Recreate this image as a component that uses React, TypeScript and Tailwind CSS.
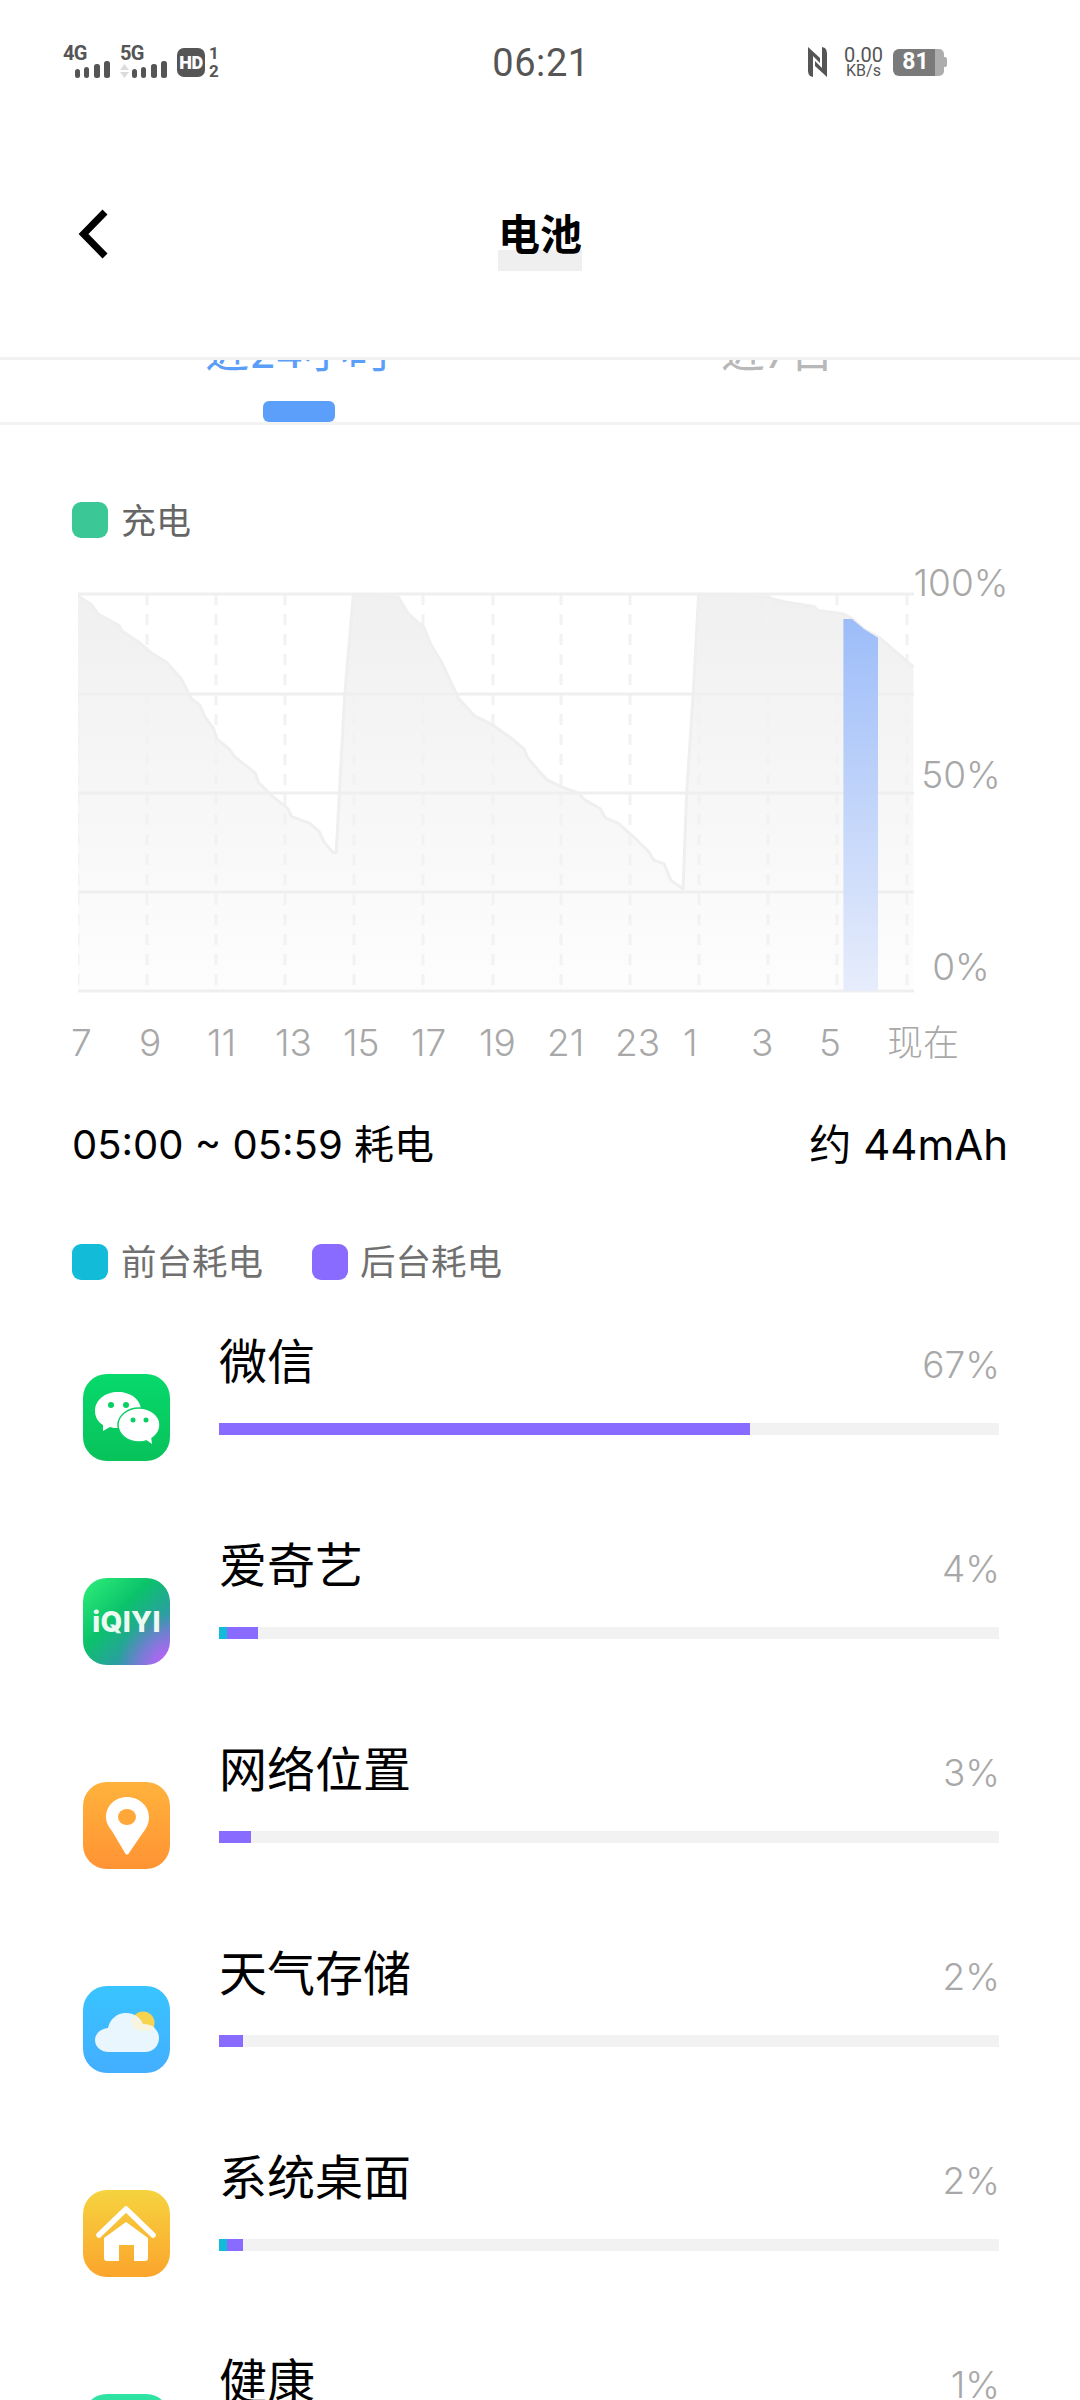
const leftPts = [[226,302],[265,325],[285,350],[345,380],[355,395],[405,425],[440,452],[482,475],[525,518],[555,570],[580,588],[595,620],[620,650],[628,675],[665,702],[680,722],[740,765],[750,790],[790,825],[835,858],[845,878],[900,897],[925,917],[940,945],[965,972],[975,972],[1000,558],[1025,298],[1155,305],[1185,350],[1230,385],[1250,430],[1280,475],[1330,570],[1375,615],[1430,640],[1480,672],[1520,702],[1530,725],[1568,765]];
const rightPts = [[20,782],[60,800],[110,817],[130,835],[175,858],[190,882],[225,895],[270,930],[315,970],[330,992],[360,1002],[380,1045],[415,1067],[425,820],[445,550],[460,298],[655,305],[720,320],[795,330],[805,340],[880,350],[905,362],[940,390],[985,412],[1015,435],[1083,488]];
const curve = [
  ...leftPts.map(([x, y]) => [x / 2.9, 480 + y / 2.61]),
  ...rightPts.map(([x, y]) => [540 + x / 2.9, 480 + y / 2.61]),
];
const line = curve.map(([x, y]) => `${x.toFixed(1)},${y.toFixed(1)}`).join(" L");
const bar = [[843.4,619],[852,619],[864,629],[878,637.8],[878,991],[843.4,991]].map((p) => p.join(",")).join(" ");
const gridY = [594, 694, 793, 892, 991];
const gridX = [78, 147, 216, 285, 354, 423, 493, 561, 630, 699, 768, 837, 907];
const hours = ["7", "9", "11", "13", "15", "17", "19", "21", "23", "1", "3", "5", "现在"];

function Signal({ label, arrows }: { label: string; arrows?: boolean }) {
  return (
    <div className="flex w-[47px] flex-col">
      <span className="h-[15px] font-['Roboto'] text-[20px] font-bold leading-[15px] tracking-[-0.8px] text-[#555]">{label}</span>
      <svg width="47" height="18" viewBox="0 0 47 18" className="mt-[-1px]">
        {arrows && <path d="M4.5 4 9 10H0ZM4.5 18 0 12H9Z" fill="#dcdcdc" />}
        <rect x="12" y="9" width="5" height="9" rx="2.5" fill="#555" />
        <rect x="21" y="7" width="5" height="11" rx="2.5" fill="#555" />
        <rect x="31" y="4" width="6" height="14" rx="2.5" fill="#555" />
        <rect x="41" y="1" width="6" height="17" rx="2.5" fill="#555" />
      </svg>
    </div>
  );
}

function WeChatIcon() {
  return (
    <div className="h-[87px] w-[87px] rounded-[24px] bg-gradient-to-b from-[#07d96c] to-[#08c25a]">
      <svg width="87" height="87" viewBox="0 0 87 87">
        <path d="M35 18C22 18 12 26 12 37c0 6 3 11 8 14l0 6 7-4c3 1 5 1 8 1 13 0 23-8 23-18S48 18 35 18Z" fill="#fff" />
        <ellipse cx="56" cy="51" rx="21" ry="17" fill="#fff" stroke="#09ce62" strokeWidth="1.5" />
        <path d="M62 65l7 5-1-8Z" fill="#fff" />
        <circle cx="28" cy="31" r="3" fill="#08cf63" />
        <circle cx="43" cy="31" r="3" fill="#08cf63" />
        <circle cx="50" cy="46" r="2.5" fill="#08cf63" />
        <circle cx="63" cy="46" r="2.5" fill="#08cf63" />
      </svg>
    </div>
  );
}

function IqiyiIcon() {
  return (
    <div className="flex h-[87px] w-[87px] items-center justify-center rounded-[24px] bg-[radial-gradient(circle_at_100%_100%,#c65ffd_0%,#c65ffd00_42%),linear-gradient(135deg,#2ff07a_0%,#0bc26a_40%,#2f9aa8_72%,#5f80d8_100%)]">
      <span className="font-['Inter'] text-[28px] font-extrabold leading-none tracking-[0.3px] text-[#ecfaf2]">iQIYI</span>
    </div>
  );
}

function PinIcon() {
  return (
    <div className="h-[87px] w-[87px] rounded-[24px] bg-gradient-to-b from-[#ffb23c] to-[#ff9333]">
      <svg width="87" height="87" viewBox="0 0 87 87">
        <path d="M44 15C32 15 23 24 23 35c0 6 3 10 6 14l13 22c1 2 3 2 4 0l13-19c4-5 7-10 7-17C66 24 56 15 44 15Z" fill="#fff" />
        <ellipse cx="44" cy="35" rx="9" ry="8" fill="#ffa738" />
      </svg>
    </div>
  );
}

function WeatherIcon() {
  return (
    <div className="h-[87px] w-[87px] rounded-[24px] bg-gradient-to-b from-[#38c4ff] to-[#43aeff]">
      <svg width="87" height="87" viewBox="0 0 87 87">
        <circle cx="60" cy="37" r="11.5" fill="#f8d34e" />
        <path d="M26 66C17 66 12 60 12 54s5-11 13-12c2-9 9-15 18-15 8 0 14 4 17 11 9 0 16 6 16 14s-6 14-14 14Z" fill="#eaf6fd" />
        <path d="M50 31c3 1 6 4 10 7 5 0 9 1 12 4-3 2-7 3-11 3-9 0-15-6-11-14Z" fill="#fff3cf" opacity="0.7" />
      </svg>
    </div>
  );
}

function HomeIcon() {
  return (
    <div className="h-[87px] w-[87px] rounded-[24px] bg-gradient-to-b from-[#f5d33f] to-[#fba42c]">
      <svg width="87" height="87" viewBox="0 0 87 87">
        <path d="M16 46 43 20 70 46" fill="none" stroke="#fff" strokeWidth="5.5" strokeLinecap="round" strokeLinejoin="round" transform="translate(0 -1)" />
        <path d="M21 48 43 32l22 16v20q0 3-3 3H51V55H36v16H24q-3 0-3-3Z" fill="#fff" />
      </svg>
    </div>
  );
}

function HealthIcon() {
  return <div className="h-[87px] w-[87px] rounded-[24px] bg-gradient-to-b from-[#2fe3a3] to-[#2bd896]" />;
}

const rows = [
  { name: "微信", pct: "67%", icon: <WeChatIcon />, fg: 0, bg: 531 },
  { name: "爱奇艺", pct: "4%", icon: <IqiyiIcon />, fg: 8, bg: 31 },
  { name: "网络位置", pct: "3%", icon: <PinIcon />, fg: 0, bg: 32 },
  { name: "天气存储", pct: "2%", icon: <WeatherIcon />, fg: 0, bg: 24 },
  { name: "系统桌面", pct: "2%", icon: <HomeIcon />, fg: 8, bg: 16 },
  { name: "健康", pct: "1%", icon: <HealthIcon />, fg: 0, bg: 16 },
];

export default function App() {
  return (
    <div className="h-[2400px] w-[1080px] overflow-hidden bg-white font-['Inter','Noto_Sans_CJK_SC',sans-serif]">
      <header className="h-[360px] border-b-[3px] border-[#f1f1f1] pt-[42px]">
        <div className="grid h-[38px] grid-cols-[1fr_auto_1fr] items-center">
          <div className="flex items-center gap-[10px] pl-[63px]">
            <Signal label="4G" />
            <Signal label="5G" arrows />
            <div className="flex h-[29px] w-[28px] items-center justify-center rounded-[7px] bg-[#555] font-['Roboto'] text-[18px] font-black tracking-[-0.5px] text-white">HD</div>
            <div className="ml-[-6px] flex h-[30px] flex-col items-center justify-between font-['Roboto'] text-[17px] font-bold leading-[12px] text-[#555]">
              <span>1</span>
              <span>2</span>
            </div>
          </div>
          <div className="ml-[2px] mt-[2px] font-['Roboto'] text-[38px] leading-[38px] tracking-[0.6px] text-[#555]">06:21</div>
          <div className="flex items-center justify-end pr-[133px]">
            <svg width="19" height="30" viewBox="0 0 19 30">
              <path d="M0 0 12 11v5L5 9v21l-3-1q-2-2-2-5Z" fill="#555" />
              <path d="M19 30 7 19v-5l7 7V0l3 1q2 2 2 5Z" fill="#555" />
            </svg>
            <div className="ml-[17px] flex w-[39px] flex-col items-center font-['Roboto'] text-[#555]">
              <span className="text-[20px] leading-[16px]">0.00</span>
              <span className="mt-[1px] text-[16px] leading-[13px]">KB/s</span>
            </div>
            <div className="ml-[10px] flex h-[27px] w-[54px] items-center">
              <div className="flex h-[27px] w-[42px] items-center justify-center rounded-l-[6px] bg-[#7a7a7a] pl-[3px] font-['Roboto'] text-[23px] font-bold text-white">81</div>
              <div className="h-[27px] w-[9px] rounded-r-[5px] bg-[#adadad]" />
              <div className="h-[10px] w-[3px] rounded-r-[2px] bg-[#adadad]" />
            </div>
          </div>
        </div>
        <div className="mt-[124px] grid h-[60px] grid-cols-[1fr_auto_1fr] items-center">
          <div className="pl-[78px]">
            <svg width="32" height="50" viewBox="0 0 32 50" className="block">
              <path d="M27 3 5.500 25 27 47" fill="none" stroke="#000" strokeWidth="7" strokeLinejoin="miter" />
            </svg>
          </div>
          <div className="relative w-[84px] whitespace-nowrap text-center text-[42px] font-bold leading-[60px] text-black">
            <div className="absolute left-0 top-[46px] h-[21px] w-[84px] bg-[#efefef]" />
            <span className="relative top-[1px]">电池</span>
          </div>
          <div />
        </div>
      </header>

      <section className="flex h-[65px] overflow-hidden border-b-[3px] border-[#f3f3f3] pl-[59px]">
        <div className="flex w-[479px] flex-col items-center">
          <span className="mt-[-30px] whitespace-nowrap text-[44px] leading-[44px] text-[#5b9ef8]">近24小时</span>
          <div className="mt-[27px] h-[21px] w-[72px] rounded-[6px] bg-[#5b9ffb]" />
        </div>
        <div className="flex w-[479px] flex-col items-center">
          <span className="mt-[-30px] whitespace-nowrap text-[44px] leading-[44px] text-[#b8b8b8]">近7日</span>
        </div>
      </section>

      <div className="mt-[77px] flex h-[36px] items-center pl-[72px]">
        <div className="h-[36px] w-[36px] rounded-[9px] bg-[#3cc896]" />
        <span className="ml-[13px] mt-[2px] text-[35px] leading-[36px] text-[#666]">充电</span>
      </div>

      <div className="mt-[25px] flex h-[430px] pl-[78px]">
        <svg width="836" height="402" viewBox="78 592 836 402" className="mt-[29px] block">
          <defs>
            <linearGradient id="area" x1="0" y1="0" x2="0" y2="1">
              <stop offset="0%" stopColor="#f0f0f0" />
              <stop offset="100%" stopColor="#fdfdfd" />
            </linearGradient>
            <linearGradient id="blue" x1="0" y1="0" x2="0" y2="1">
              <stop offset="0%" stopColor="#9abbf9" />
              <stop offset="100%" stopColor="#e6ecfb" />
            </linearGradient>
          </defs>
          <path d={`M${line} L913.400,991 L78,991 Z`} fill="url(#area)" />
          {gridX.map((x) => (
            <line key={x} x1={x} x2={x} y1={594} y2={994} stroke="#f2f2f2" strokeWidth="3" strokeDasharray="11 9" />
          ))}
          {gridY.map((y) => (
            <line key={y} x1={78} x2={914} y1={y} y2={y} stroke="#efefef" strokeWidth="3" />
          ))}
          <path d={`M${line}`} fill="none" stroke="#efefef" strokeWidth="3" strokeLinejoin="round" />
          <polygon points={bar} fill="url(#blue)" opacity="0.97" />
        </svg>
        <div className="flex h-[424px] w-[94px] flex-col items-center justify-between text-[37px] font-light leading-[40px] text-[#a8a8a8]">
          <span>100%</span>
          <span>50%</span>
          <span>0%</span>
        </div>
      </div>

      <div className="mt-[30px] flex pl-[71px] text-[37px] font-light leading-[40px] text-[#a8a8a8]">
        {hours.map((h) => (
          <span key={h} className="w-[68px] shrink-0 whitespace-nowrap text-[37px] last:text-[36px]">{h}</span>
        ))}
      </div>

      <div className="mt-[57px] flex items-center justify-between px-[72px] text-[40px] leading-[50px] text-black">
        <span>05:00 ~ 05:59 耗电</span>
        <span className="text-[42px]">约 44mAh</span>
      </div>

      <div className="mt-[74px] flex h-[36px] items-center pl-[72px] text-[35.5px] leading-[36px] text-[#707070]">
        <div className="h-[36px] w-[36px] rounded-[9px] bg-[#12bcd8]" />
        <span className="ml-[13px] mt-[2px] w-[141px] whitespace-nowrap">前台耗电</span>
        <div className="ml-[50px] h-[36px] w-[36px] rounded-[9px] bg-[#8a6bff]" />
        <span className="ml-[12px] mt-[2px] whitespace-nowrap">后台耗电</span>
      </div>

      <div className="mt-[57px]">
        {rows.map((r) => (
          <div key={r.name} className="flex h-[204px] pl-[83px] pr-[81px]">
            <div className="mt-[37px] shrink-0">{r.icon}</div>
            <div className="ml-[49px] flex-1">
              <div className="flex h-[50px] items-center justify-between">
                <span className="text-[48px] leading-[50px] text-black">{r.name}</span>
                <span className="mr-[-1px] mt-[6px] text-[37px] font-light leading-[40px] text-[#a8a8a8]">{r.pct}</span>
              </div>
              <div className="mt-[36px] flex h-[12px] bg-[#f2f2f2]">
                {r.fg > 0 && <div className="bg-[#12bcd8]" style={{ width: r.fg }} />}
                <div className="bg-[#8a6bff]" style={{ width: r.bg }} />
              </div>
            </div>
          </div>
        ))}
      </div>
    </div>
  );
}
